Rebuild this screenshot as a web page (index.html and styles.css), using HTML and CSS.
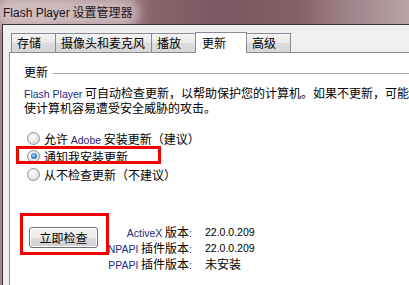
FILE: index.html
```html
<!DOCTYPE html>
<html lang="zh-CN">
<head>
<meta charset="utf-8">
<title>Flash Player 设置管理器</title>
<link rel="stylesheet" href="styles.css">
</head>
<body>
<div class="window">
  <div class="titlebar"><span class="title-text"><span class="title-lat">Flash Player</span> 设置管理器</span></div>
  <div class="client">
    <div class="tabs">
      <div class="tab">存储</div>
      <div class="tab">摄像头和麦克风</div>
      <div class="tab">播放</div>
      <div class="tab sel">更新</div>
      <div class="tab">高级</div>
    </div>
    <div class="panel">
      <div class="group-head"><span>更新</span><span class="group-line"></span></div>
      <p class="desc"><span class="lat">Flash Player</span> 可自动检查更新，以帮助保护您的计算机。如果不更新，可能<br>使计算机容易遭受安全威胁的攻击。</p>
      <div class="radios">
        <div class="radio-row"><span class="radio"></span><span>允许 <span class="lat">Adobe</span> 安装更新（建议）</span></div>
        <div class="radio-row"><span class="radio checked"></span><span>通知我安装更新</span></div>
        <div class="radio-row"><span class="radio"></span><span>从不检查更新（不建议）</span></div>
      </div>
      <div class="bottom">
        <button class="btn">立即检查</button>
        <div class="versions">
          <span class="vlabel"><span class="lat">ActiveX</span> 版本<span class="lat">:</span></span><span class="vval num">22.0.0.209</span>
          <span class="vlabel"><span class="lat">NPAPI</span> 插件版本<span class="lat">:</span></span><span class="vval num">22.0.0.209</span>
          <span class="vlabel"><span class="lat">PPAPI</span> 插件版本<span class="lat">:</span></span><span class="vval">未安装</span>
        </div>
      </div>
      <div class="mark mark-radio"></div>
      <div class="mark mark-btn"></div>
    </div>
  </div>
</div>
</body>
</html>
```

FILE: styles.css
```css
html, body {
  margin: 0;
  padding: 0;
}
body {
  width: 409px;
  height: 285px;
  overflow: hidden;
  background: #9a8286;
  font-family: "Noto Sans CJK SC", sans-serif;
  font-size: 12px;
  color: #000;
}
.window {
  display: flex;
  flex-direction: column;
  width: 409px;
  height: 285px;
  background: linear-gradient(90deg, #a3878b 0%, #8e6c73 30%, #7a5660 55%, #835f68 72%, #a48a90 88%, #b8a3a7 100%);
}
.titlebar {
  height: 24px;
  flex: none;
  display: flex;
  align-items: center;
  padding-left: 3px;
}
.title-text {
  font-size: 12px;
  line-height: 16px;
  color: #1c1416;
  background: rgba(236, 226, 228, 0.6);
  box-shadow: 0 0 11px 8px rgba(236, 226, 228, 0.6);
  border-radius: 8px;
  margin-top: 1px;
}
.title-lat {
  font-family: "Liberation Sans", sans-serif;
  font-size: 12px;
}
.client {
  flex: 1;
  margin-left: 2px;
  border-top: 1px solid #3e3034;
  border-left: 1px solid #3e3034;
  background: #f0f0f0;
  padding: 7px 0 0 6px;
  display: flex;
  flex-direction: column;
  min-height: 0;
}
.tabs {
  display: flex;
  align-items: flex-end;
  height: 21px;
  padding-left: 2px;
  margin-bottom: -1px;
  position: relative;
  z-index: 1;
}
.tab {
  box-sizing: border-box;
  height: 19px;
  min-width: 45px;
  padding: 0 6px 0 5px;
  margin-bottom: 1px;
  border: 1px solid #898c95;
  border-bottom: none;
  margin-right: -1px;
  background: linear-gradient(#f4f4f4, #e9e9e9 50%, #dcdcdc 51%, #d6d6d6);
  line-height: 17px;
  white-space: nowrap;
}
.tab.sel {
  height: 21px;
  min-width: 52px;
  margin-bottom: 0;
  background: #fff;
  line-height: 19px;
  padding-left: 6px;
  position: relative;
  z-index: 2;
}
.panel {
  flex: 1;
  position: relative;
  background: #fff;
  border: 1px solid #898c95;
  border-right: none;
  border-bottom: none;
  padding-left: 14px;
}
.group-head {
  display: flex;
  align-items: center;
  margin-top: 12px;
  height: 14px;
  line-height: 14px;
}
.group-line {
  flex: 1;
  height: 1px;
  background: #a5a5a5;
  margin-left: 5px;
  margin-top: 2px;
}
.lat {
  font-family: "Liberation Sans", sans-serif;
  font-size: 10.5px;
  color: #1e2a78;
}
.desc {
  margin: 7px 0 0 0;
  line-height: 13px;
  white-space: nowrap;
}
.radios {
  margin-top: 15px;
  padding-left: 3px;
}
.radio-row {
  display: flex;
  align-items: center;
  height: 18px;
  gap: 4px;
  white-space: nowrap;
}
.radio {
  box-sizing: border-box;
  width: 13px;
  height: 13px;
  border-radius: 50%;
  border: 1px solid #8e8f8f;
  background: radial-gradient(circle at 40% 35%, #ffffff 0%, #f0f0f0 35%, #cfcfcf 100%);
  position: relative;
  flex: none;
}
.radio.checked::after {
  content: "";
  position: absolute;
  left: 2.5px;
  top: 2.5px;
  width: 6px;
  height: 6px;
  border-radius: 50%;
  background: radial-gradient(circle at 45% 40%, #b8e0ff 0%, #3c8ed6 45%, #14508c 100%);
}
.bottom {
  display: flex;
  align-items: flex-start;
  margin-top: 41px;
}
.btn {
  box-sizing: border-box;
  width: 69px;
  height: 21px;
  margin: 3px 0 0 5px;
  padding: 0;
  border: 1px solid #707070;
  border-radius: 3px;
  background: linear-gradient(#f2f2f2, #ebebeb 50%, #dddddd 51%, #cfcfcf);
  box-shadow: inset 0 0 0 1px #fcfcfc;
  font-family: "Noto Sans CJK SC", sans-serif;
  font-size: 12px;
  color: #000;
  line-height: 18px;
}
.versions {
  display: grid;
  grid-template-columns: 90px auto;
  column-gap: 13px;
  grid-auto-rows: 16px;
  margin-left: 4px;
  line-height: 16px;
  white-space: nowrap;
}
.vlabel {
  text-align: right;
}
.vval.num {
  font-family: "Liberation Sans", sans-serif;
  font-size: 10.5px;
}
.mark {
  position: absolute;
  border: 3px solid #f00000;
  box-sizing: border-box;
}
.mark-radio {
  left: 6px;
  top: 93px;
  width: 145px;
  height: 18px;
}
.mark-btn {
  left: 10px;
  top: 160px;
  width: 89px;
  height: 42px;
}
```
